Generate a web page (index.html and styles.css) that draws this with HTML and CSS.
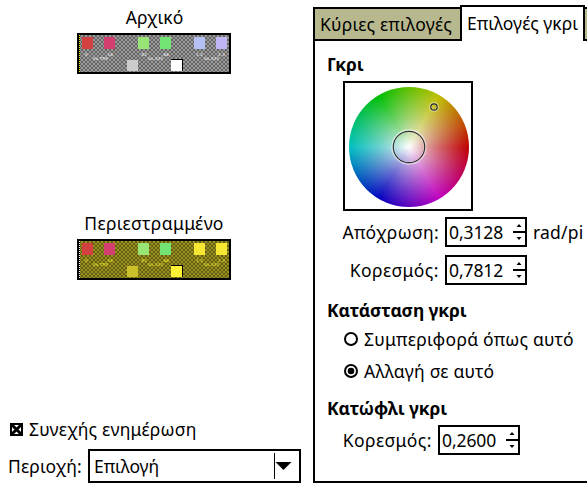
FILE: index.html
```html
<!DOCTYPE html>
<html lang="el">
<head>
<meta charset="utf-8">
<title>Επιλογές γκρι</title>
<link rel="stylesheet" href="styles.css">
</head>
<body>
<svg class="defs" width="0" height="0">
  <defs>
    <g id="swatches">
      <rect x="3" y="2" width="11" height="12" fill="#d34040"/>
      <rect x="25" y="2" width="11" height="12" fill="#d34070"/>
      <rect x="59" y="2" width="11" height="12" fill="#97e574"/>
      <rect x="81" y="2" width="11" height="12" fill="#72e574"/>
    </g>
    <g id="labels" class="tiny">
      <text x="6" y="21">0</text><text x="27" y="21">.16</text><text x="14" y="25">0x.755</text>
      <text x="61" y="21">.52</text><text x="83" y="21">.68</text><text x="69" y="25">0x.333</text>
      <text x="117" y="21">1.2</text><text x="139" y="21">1.3</text><text x="125" y="25">0x.333</text>
    </g>
  </defs>
</svg>
<main class="app">
  <section class="left">
    <div class="caption original">Αρχικό</div>
    <svg class="preview" width="150" height="37" shape-rendering="crispEdges">
      <defs><pattern id="c1" width="4" height="4" patternUnits="userSpaceOnUse"><rect width="4" height="4" fill="#999"/><path d="M0 0h2v2H0zM2 2h2v2H2z" fill="#666"/></pattern></defs>
      <rect width="150" height="37" fill="url(#c1)"/>
      <path d="M.5 0V37" stroke="#000"/><path d="M.5 0V37" stroke="#ff0" stroke-dasharray="1 1"/>
      <use href="#swatches"/>
      <rect x="115" y="2" width="11" height="12" fill="#b5c0f5"/><rect x="137" y="2" width="11" height="12" fill="#c0b5f5"/>
      <rect x="48" y="25" width="11" height="11" fill="#ccc"/>
      <rect x="92" y="24" width="12" height="12"/><rect x="92" y="25" width="11" height="11" fill="#fff"/>
      <use href="#labels" fill="#fff"/>
    </svg>
    <div class="caption rotated">Περιεστραμμένο</div>
    <svg class="preview" width="150" height="37" shape-rendering="crispEdges">
      <defs><pattern id="c2" width="4" height="4" patternUnits="userSpaceOnUse"><rect width="4" height="4" fill="#999020"/><path d="M0 0h2v2H0zM2 2h2v2H2z" fill="#666015"/></pattern></defs>
      <rect width="150" height="37" fill="url(#c2)"/>
      <path d="M.5 0V37" stroke="#000"/><path d="M.5 0V37" stroke="#fff" stroke-dasharray="1 1"/>
      <use href="#swatches"/>
      <rect x="115" y="2" width="11" height="12" fill="#f5e733"/><rect x="137" y="2" width="11" height="12" fill="#f5e733"/>
      <rect x="48" y="25" width="11" height="11" fill="#ccc02a"/>
      <rect x="92" y="24" width="12" height="12"/><rect x="92" y="25" width="11" height="11" fill="#fff135"/>
      <use href="#labels" fill="#fff135"/>
    </svg>
    <div class="update">
      <svg width="13" height="13"><rect x="1" y="1" width="11" height="11" fill="#fff" stroke="#000" stroke-width="2"/><path d="M2 2l9 9M11 2l-9 9" stroke="#000" stroke-width="3"/></svg>
      <span class="t-update">Συνεχής ενημέρωση</span>
    </div>
    <div class="area">
      <span class="t-area">Περιοχή:</span>
      <div class="combo"><span class="t-combo">Επιλογή</span><svg width="20" height="26"><path d="M.5 0V26" stroke="#000"/><path d="M1.5 9H17.500L9.500 17z"/></svg></div>
    </div>
  </section>
  <section class="right">
    <nav class="tabs">
      <div class="tab"><span class="t-main">Κύριες επιλογές</span></div>
      <div class="tab active"><span class="t-gray">Επιλογές γκρι</span></div>
      <div class="tab rest"></div>
    </nav>
    <div class="panel">
      <h2 class="h-gray">Γκρι</h2>
      <div class="wheelbox"><div class="wheel">
        <svg width="120" height="120" fill="none">
          <circle cx="60" cy="60" r="16.2" stroke="#fff" stroke-opacity=".5" stroke-width="3"/><circle cx="60" cy="60" r="15.7" stroke="#333" stroke-width="1.2"/>
          <circle cx="85" cy="20" r="3.5" stroke="#fff" stroke-opacity=".5" stroke-width="2.6"/><circle cx="85" cy="20" r="3.2" stroke="#222" stroke-width="1.2"/>
        </svg>
      </div></div>
      <div class="field hue"><label class="t-hue">Απόχρωση:</label><div class="spin"><span>0,3128</span><svg width="13" height="18"><path d="M1 9H13" stroke="#000" stroke-width="2"/><path d="M4.500 4L7 1L9.500 4zM4.500 14L7 17L9.500 14z"/></svg></div><span class="t-unit">rad/pi</span></div>
      <div class="field sat"><label class="t-sat">Κορεσμός:</label><div class="spin"><span>0,7812</span><svg width="13" height="18"><path d="M1 9H13" stroke="#000" stroke-width="2"/><path d="M4.500 4L7 1L9.500 4zM4.500 14L7 17L9.500 14z"/></svg></div></div>
      <h2 class="h-mode">Κατάσταση γκρι</h2>
      <div class="radio first"><svg width="14" height="14"><circle cx="7" cy="7" r="6" fill="#fff" stroke="#000" stroke-width="2"/></svg><span class="t-treat">Συμπεριφορά όπως αυτό</span></div>
      <div class="radio"><svg width="14" height="14"><circle cx="7" cy="7" r="6" fill="#fff" stroke="#000" stroke-width="2"/><circle cx="7" cy="7" r="3.3"/></svg><span class="t-change">Αλλαγή σε αυτό</span></div>
      <h2 class="h-thr">Κατώφλι γκρι</h2>
      <div class="field thr"><label class="t-sat">Κορεσμός:</label><div class="spin"><span>0,2600</span><svg width="13" height="18"><path d="M1 9H13" stroke="#000" stroke-width="2"/><path d="M4.500 4L7 1L9.500 4zM4.500 14L7 17L9.500 14z"/></svg></div></div>
    </div>
  </section>
</main>
</body>
</html>
```
FILE: styles.css
```css
* { box-sizing: border-box; }
body { margin: 0; width: 587px; height: 484px; overflow: hidden; background: #fff; color: #000; font: 17.5px/24px "Noto Sans", "Open Sans", sans-serif; white-space: nowrap; }
svg { display: block; flex: none; }
.defs { position: absolute; }
.app { display: grid; grid-template-columns: 313px 274px; height: 484px; }
.left { display: flex; flex-direction: column; align-items: flex-start; }
.caption { width: 154px; margin-left: 77px; height: 24px; display: flex; justify-content: center; }
.original { margin-top: 5px; padding-left: 1px; }
.rotated { margin-top: 137px; letter-spacing: .32px; }
.preview { box-sizing: content-box; margin: 4px 0 0 77px; border: 2px solid #000; }
.tiny { font: 4px/4px "DejaVu Sans", sans-serif; letter-spacing: .2px; }
.update { display: flex; align-items: center; gap: 6px; height: 24px; margin: 137px 0 0 10px; }
.t-update { letter-spacing: .2px; }
.area { display: flex; align-items: center; height: 34px; margin: 8px 0 0 8px; }
.t-area { width: 80px; letter-spacing: .12px; }
.combo { width: 213px; height: 34px; border: 2px solid #000; display: flex; align-items: center; justify-content: space-between; padding: 0 5px 0 4px; }
.t-combo { letter-spacing: -.1px; }
.right { padding-top: 5px; overflow: hidden; }
.tabs { display: flex; align-items: flex-end; height: 36px; }
.tab { flex: none; width: 147px; height: 34px; background: #b8b88f; border: 2px solid #000; border-right: 0; padding: 3px 0 0 5px; }
.tab.active { width: 125px; height: 36px; background: #fff; border-right: 2px solid #000; border-bottom: 0; padding-top: 4px; }
.tab.rest { width: 20px; border-left: 0; }
.t-main { letter-spacing: .22px; }
.panel { height: 442px; border-left: 2px solid #000; border-bottom: 2px solid #000; padding: 11px 0 0 12px; }
h2 { margin: 0; font-size: 17.5px; line-height: 24px; height: 24px; font-weight: 700; letter-spacing: -.1px; }
.wheelbox { width: 130px; height: 130px; border: 2px solid #000; margin: 5px 0 0 16px; padding: 3.5px 0 0 3.5px; }
.wheel { width: 120px; height: 120px; border-radius: 50%; background: radial-gradient(circle closest-side, #fff 0%, rgba(236,236,236,.71) 25%, rgba(232,232,232,.45) 50%, rgba(230,230,230,.217) 75%, rgba(230,230,230,0) 100%), conic-gradient(from 90deg, #bf0000, #bf00bf, #0000bf, #00bfbf, #00bf00, #bfbf00, #bf0000); }
.field { display: flex; align-items: center; height: 30px; margin-left: 16px; }
.field label { width: 102px; padding-right: 6px; display: flex; justify-content: flex-end; }
.t-hue { letter-spacing: .32px; }
.t-sat { letter-spacing: .45px; }
.hue { margin-top: 6px; }
.sat { margin-top: 8px; }
.spin { width: 82px; height: 30px; flex: none; border: 2px solid #000; display: flex; align-items: center; justify-content: space-between; padding-left: 2px; letter-spacing: -.1px; }
.t-unit { margin-left: 6px; letter-spacing: .2px; }
.h-mode { margin-top: 13px; }
.radio { display: flex; align-items: center; gap: 6px; height: 24px; margin: 8px 0 0 17px; }
.radio.first { margin-top: 5px; }
.t-treat { letter-spacing: .25px; }
.t-change { letter-spacing: .22px; }
.h-thr { margin-top: 13px; }
.thr { margin-top: 5px; }
.thr label { width: 95px; }
```
